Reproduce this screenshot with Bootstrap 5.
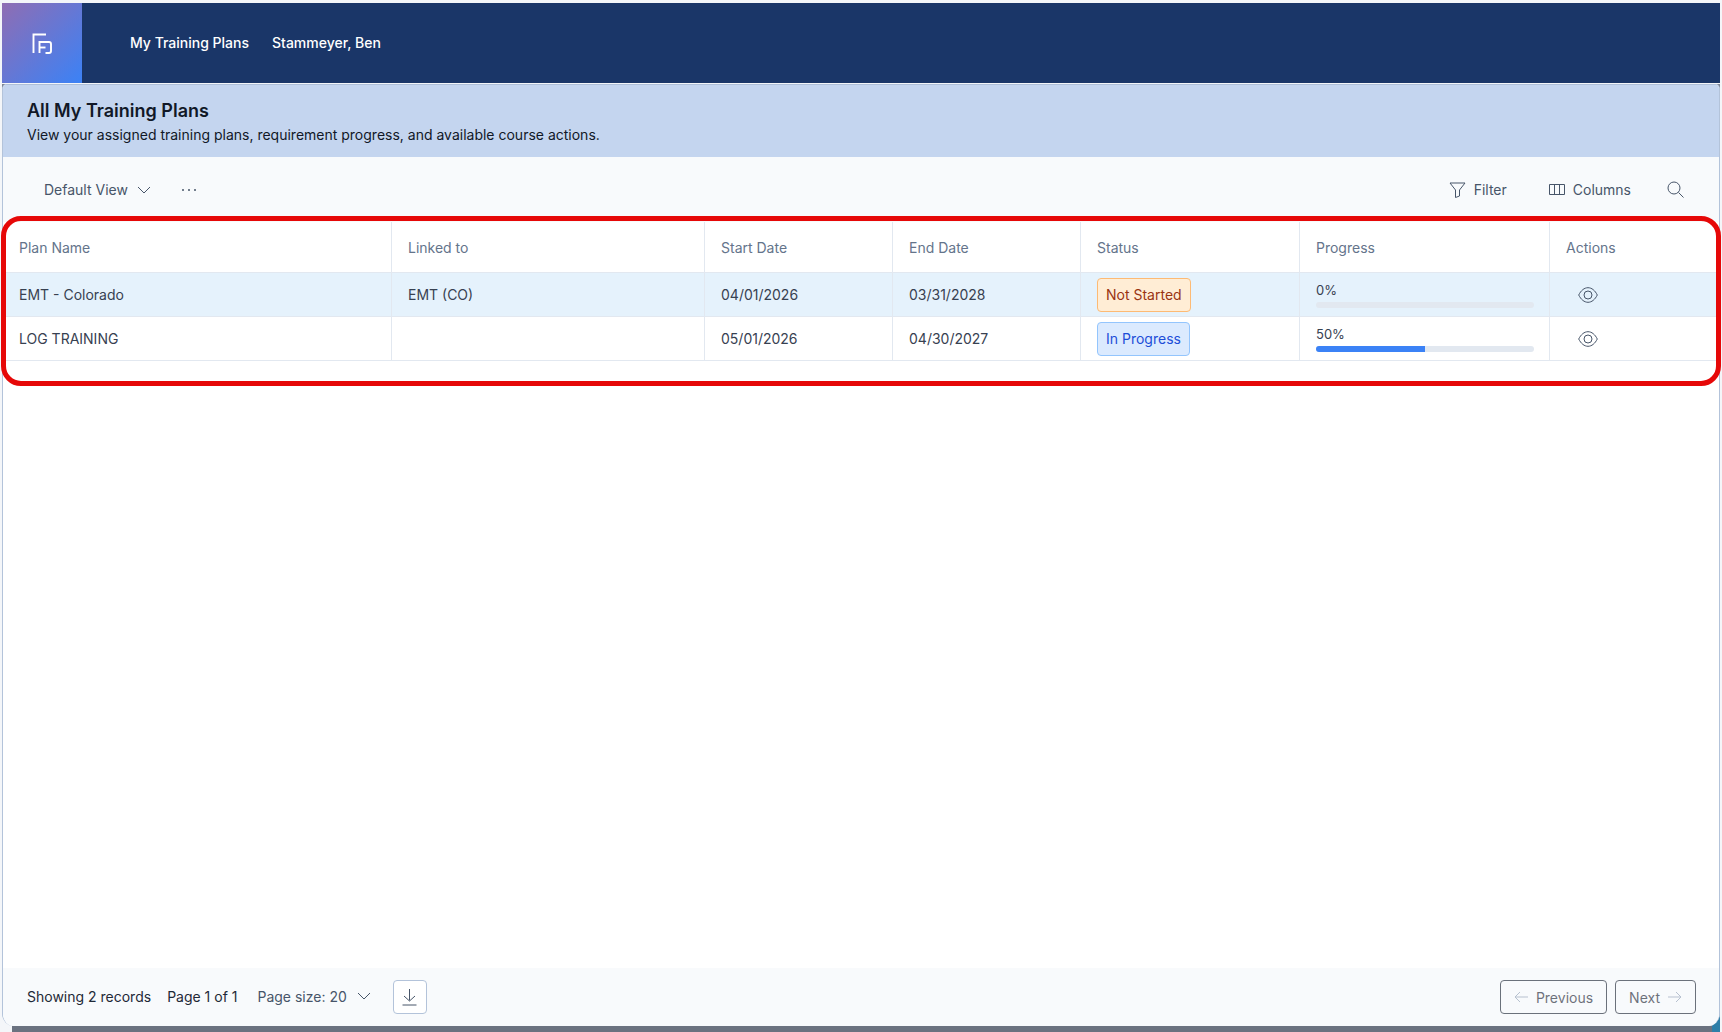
<!DOCTYPE html>
<html lang="en">
<head>
  <meta charset="UTF-8" />
  <title>My Training Plans</title>
  <link href="https://cdn.jsdelivr.net/npm/bootstrap@5.3.0/dist/css/bootstrap.min.css" rel="stylesheet" />
  <style>
    html, body { height: 100%; }
    body {
      background: #f4f6f9;
      font-family: Inter, "Liberation Sans", sans-serif;
      font-size: 14px;
      color: #374151;
      overflow: hidden;
    }
    .app-frame { height: 1032px; padding: 3px 2px 0; }

    /* top bar */
    .top-bar { height: 80px; background: #1a3668; }
    .logo-box {
      width: 80px;
      height: 80px;
      background: linear-gradient(135deg, #8f6db3 0%, #3b82f6 100%);
    }
    .top-links { gap: 23px; padding: 0 0 2px 48px; }
    .navbar-expand .top-links .nav-link { color: #fff; font-weight: 500; font-size: 14px; padding: 0; }

    /* page body */
    .page-back {
      margin-top: 1px;
      height: 948px;
      background: linear-gradient(to right, #f4f6f9 10px, #6b7280 10px, #6b7280 calc(100% - 8px), #2f7fa8 calc(100% - 8px)) bottom / 100% 20px no-repeat, #7d8696;
    }
    .page-card {
      height: 942px;
      background: #fff;
      border-left: 1px solid #b3c3da;
      border-right: 1px solid #b3c3da;
      border-radius: 5px 5px 12px 12px;
      overflow: hidden;
    }
    .title-band { height: 73px; background: #c4d5ef; border-top: 1px solid #aebfd8; padding: 14px 24px 0; color: #111827; }
    .title-band h1 { font-size: 18px; font-weight: 600; line-height: 24px; margin: 0 0 1px; }
    .title-band p { font-size: 14px; line-height: 22px; margin: 0; }

    .tool-row { height: 65px; background: #f8fafc; padding: 0 35px 0 41px; color: #475569; }
    .tool-btn { display: flex; align-items: center; gap: 8px; color: #475569; font-size: 14px; padding: 0; border: 0; }
    .tool-view { gap: 9px; }
    .dots-icon { margin-left: 30px; }
    .tool-filter { margin-right: 42px; }
    .tool-columns { margin-right: 36px; }

    /* table */
    .plan-table { table-layout: fixed; width: 100%; margin: 0; font-size: 14px; }
    .plan-table th, .plan-table td {
      padding: 0 15px 0 16.5px;
      vertical-align: middle;
      border-bottom: 1px solid #e2e8f0;
      border-right: 1px solid #e2e8f0;
      background: transparent;
      box-shadow: none;
      color: #374151;
    }
    .plan-table th:first-child, .plan-table td:first-child { padding-left: 16px; }
    .plan-table th:last-child, .plan-table td:last-child { border-right: 0; }
    .plan-table th { height: 50px; padding-top: 2px; font-weight: 400; color: #64748b; }
    .plan-table td { height: 44px; }
    .plan-table tr.row-active td { background: #e5f2fc; }
    .w-plan { width: 388px; }
    .w-link { width: 313px; }
    .w-date { width: 188px; }
    .w-status { width: 219px; }
    .w-progress { width: 250px; }

    .state-tag {
      display: inline-flex;
      align-items: center;
      height: 34px;
      margin-top: 1px;
      padding: 0 8px;
      border: 1px solid;
      border-radius: 4px;
      font-size: 14px;
    }
    .state-wait { background: #ffedd5; border-color: #fdba74; color: #9a3412; }
    .state-run { background: #dbeafe; border-color: #93c5fd; color: #1d4ed8; }

    .pct-label { font-size: 13px; line-height: 14px; margin: 2px 0 5px; color: #374151; }
    .pct-bar { height: 6px; border-radius: 3px; background: #e2e8f0; }
    .pct-bar .progress-bar { background: #3b82f6; }
    .eye-btn { display: block; margin-top: 1px; padding: 0 0 0 12px; border: 0; line-height: 0; }

    /* footer */
    .page-foot { height: 58px; background: #f8fafc; padding: 0 23px 0 24px; color: #1f2937; }
    .foot-text { padding-bottom: 2px; }
    .foot-size { color: #475569; gap: 10px; margin-left: 20px; margin-right: 22px; }
    .foot-icon-btn {
      width: 34px;
      height: 34px;
      padding: 0;
      display: flex;
      align-items: center;
      justify-content: center;
      background: #fff;
      border: 1px solid #b3c3da;
      border-radius: 4px;
    }
    .pager-btn {
      height: 34px;
      padding: 0 13px;
      display: flex;
      align-items: center;
      gap: 8px;
      background: #fff;
      border: 1px solid #b3c3da;
      border-radius: 4px;
      color: #94a3b8;
      font-size: 14px;
    }

    .red-mark {
      position: absolute;
      left: 1px;
      top: 216px;
      width: 1720px;
      height: 170px;
      border: 5px solid #e60808;
      border-radius: 20px;
      pointer-events: none;
    }
  </style>
</head>
<body>
  <div class="app-frame d-flex flex-column">
    <nav class="top-bar navbar navbar-expand p-0 flex-nowrap justify-content-start">
      <div class="logo-box d-flex align-items-center justify-content-center">
        <svg width="24" height="24" viewBox="0 0 24 24" fill="none" stroke="#fff" stroke-width="1.9">
          <path d="M3.500 22V3.500H16" />
          <path d="M9.500 22V11H19a2 2 0 0 1 2 2v7a2 2 0 0 1-2 2h-3.500" />
          <path d="M9.500 16.500H15.500" />
        </svg>
      </div>
      <div class="navbar-nav top-links">
        <a class="nav-link" href="#">My Training Plans</a>
        <a class="nav-link" href="#">Stammeyer, Ben</a>
      </div>
    </nav>

    <div class="page-back">
      <div class="page-card d-flex flex-column">
        <div class="title-band">
          <h1>All My Training Plans</h1>
          <p>View your assigned training plans, requirement progress, and available course actions.</p>
        </div>

        <div class="tool-row d-flex align-items-center justify-content-between">
          <div class="d-flex align-items-center">
            <button class="btn tool-btn tool-view" type="button">Default View
              <svg width="14" height="8" viewBox="0 0 14 8" fill="none" stroke="#475569"><path d="M1 1l6 6 6-6" /></svg>
            </button>
            <svg class="dots-icon" width="16" height="4" viewBox="0 0 16 4" fill="#475569">
              <circle cx="2" cy="2" r="1" /><circle cx="8" cy="2" r="1" /><circle cx="14" cy="2" r="1" />
            </svg>
          </div>
          <div class="d-flex align-items-center">
            <button class="btn tool-btn tool-filter" type="button">
              <svg width="17" height="16" viewBox="0 0 17 16" fill="none" stroke="#475569"><path d="M1 1h15l-5.500 7v6l-4 1.500V8z" /></svg>
              Filter
            </button>
            <button class="btn tool-btn tool-columns" type="button">
              <svg width="16" height="11" viewBox="0 0 16 11" fill="none" stroke="#475569"><path d="M.5.500h15v10H.500zM5.500.500v10M10.500.500v10" /></svg>
              Columns
            </button>
            <svg width="17" height="17" viewBox="0 0 17 17" fill="none" stroke="#475569"><circle cx="7" cy="7" r="6" /><path d="M11.500 11.500l5 5" /></svg>
          </div>
        </div>

        <div class="flex-grow-1">
          <table class="table plan-table">
            <colgroup>
              <col class="w-plan" /><col class="w-link" /><col class="w-date" /><col class="w-date" />
              <col class="w-status" /><col class="w-progress" /><col />
            </colgroup>
            <thead>
              <tr>
                <th>Plan Name</th><th>Linked to</th><th>Start Date</th><th>End Date</th>
                <th>Status</th><th>Progress</th><th>Actions</th>
              </tr>
            </thead>
            <tbody>
              <tr class="row-active">
                <td>EMT - Colorado</td>
                <td>EMT (CO)</td>
                <td>04/01/2026</td>
                <td>03/31/2028</td>
                <td><span class="state-tag state-wait">Not Started</span></td>
                <td>
                  <div class="pct-label">0%</div>
                  <div class="progress pct-bar"><div class="progress-bar" style="width: 0%"></div></div>
                </td>
                <td>
                  <button class="btn eye-btn" type="button" aria-label="View">
                    <svg width="20" height="16" viewBox="0 0 20 16" fill="none" stroke="#475569"><path d="M.7 8C3 3.500 6.200.7 10 .7S17 3.500 19.300 8C17 12.500 13.800 15.300 10 15.300S3 12.500 .7 8z" /><circle cx="10" cy="8" r="4" /></svg>
                  </button>
                </td>
              </tr>
              <tr>
                <td>LOG TRAINING</td>
                <td></td>
                <td>05/01/2026</td>
                <td>04/30/2027</td>
                <td><span class="state-tag state-run">In Progress</span></td>
                <td>
                  <div class="pct-label">50%</div>
                  <div class="progress pct-bar"><div class="progress-bar" style="width: 50%"></div></div>
                </td>
                <td>
                  <button class="btn eye-btn" type="button" aria-label="View">
                    <svg width="20" height="16" viewBox="0 0 20 16" fill="none" stroke="#475569"><path d="M.7 8C3 3.500 6.200.7 10 .7S17 3.500 19.300 8C17 12.500 13.800 15.300 10 15.300S3 12.500 .7 8z" /><circle cx="10" cy="8" r="4" /></svg>
                  </button>
                </td>
              </tr>
            </tbody>
          </table>
        </div>

        <div class="page-foot d-flex align-items-center justify-content-between">
          <div class="d-flex align-items-center">
            <span class="foot-text">Showing 2 records</span>
            <span class="foot-text ms-3">Page 1 of 1</span>
            <span class="foot-text foot-size d-flex align-items-center">Page size: 20
              <svg width="14" height="8" viewBox="0 0 14 8" fill="none" stroke="#475569"><path d="M1 1l6 6 6-6" /></svg>
            </span>
            <button class="btn foot-icon-btn" type="button" aria-label="Download">
              <svg width="15" height="18" viewBox="0 0 15 18" fill="none" stroke="#475569"><path d="M7.500 1v11.500M2 8l5.500 5L13 8M.5 17h14" /></svg>
            </button>
          </div>
          <div class="d-flex align-items-center gap-2">
            <button class="btn pager-btn" type="button" disabled>
              <svg width="14" height="12" viewBox="0 0 14 12" fill="none" stroke="#94a3b8"><path d="M14 6H1M6 1L1 6l5 5" /></svg>
              Previous
            </button>
            <button class="btn pager-btn" type="button" disabled>Next
              <svg width="14" height="12" viewBox="0 0 14 12" fill="none" stroke="#94a3b8"><path d="M0 6h13M8 1l5 5-5 5" /></svg>
            </button>
          </div>
        </div>
      </div>
    </div>
  </div>
  <div class="red-mark"></div>
</body>
</html>
